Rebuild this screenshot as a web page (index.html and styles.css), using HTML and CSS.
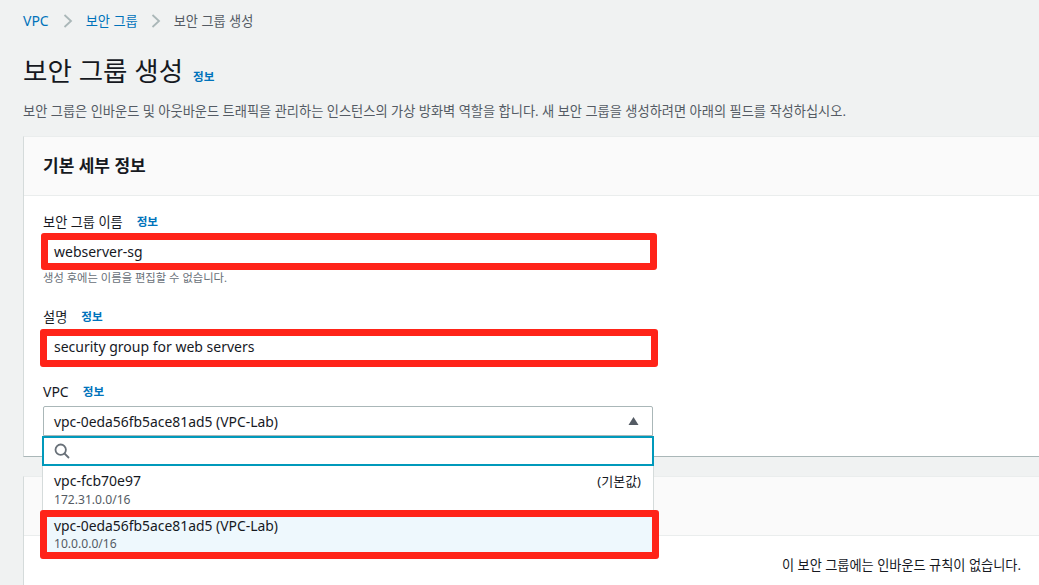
FILE: index.html
```html
<!DOCTYPE html>
<html lang="ko">
<head>
<meta charset="utf-8">
<title>보안 그룹 생성</title>
<link rel="stylesheet" href="styles.css">
</head>
<body>
<div class="page">
  <nav class="crumbs">
    <a class="link link-root">VPC</a>
    <svg class="sep" viewBox="0 0 10 14" width="10" height="14"><path d="M1.5 1 L8 7 L1.5 13" fill="none" stroke="#aab7b8" stroke-width="1.8"/></svg>
    <a class="link">보안 그룹</a>
    <svg class="sep sep-last" viewBox="0 0 10 14" width="10" height="14"><path d="M1.5 1 L8 7 L1.5 13" fill="none" stroke="#aab7b8" stroke-width="1.8"/></svg>
    <span class="current">보안 그룹 생성</span>
  </nav>
  <header class="title-row">
    <h1 class="title">보안 그룹 생성</h1>
    <a class="info info-title">정보</a>
  </header>
  <p class="lead">보안 그룹은 인바운드 및 아웃바운드 트래픽을 관리하는 인스턴스의 가상 방화벽 역할을 합니다. 새 보안 그룹을 생성하려면 아래의 필드를 작성하십시오.</p>

  <section class="card">
    <div class="card-head"><h2 class="card-title">기본 세부 정보</h2></div>
    <div class="card-body">
      <div class="field field-name">
        <div class="label-row"><span class="label">보안 그룹 이름</span><a class="info">정보</a></div>
        <div class="input">webserver-sg</div>
        <div class="hint">생성 후에는 이름을 편집할 수 없습니다.</div>
      </div>
      <div class="field field-desc">
        <div class="label-row"><span class="label">설명</span><a class="info">정보</a></div>
        <div class="input">security group for web servers</div>
      </div>
      <div class="field field-vpc">
        <div class="label-row"><span class="label label-latin">VPC</span><a class="info">정보</a></div>
        <div class="select">
          <span class="select-value">vpc-0eda56fb5ace81ad5 (VPC-Lab)</span>
          <svg class="caret" viewBox="0 0 10 8" width="11" height="8"><path d="M5 0 L10 8 L0 8 Z" fill="#545b64"/></svg>
          <div class="menu">
            <div class="search">
              <svg viewBox="0 0 16 16" width="16" height="16"><circle cx="6.7" cy="6.7" r="5.2" fill="none" stroke="#687078" stroke-width="1.8"/><path d="M10.5 10.5 L15 15" stroke="#687078" stroke-width="1.8" fill="none"/></svg>
            </div>
            <div class="option">
              <div class="option-main"><span>vpc-fcb70e97</span><span class="option-tag">(기본값)</span></div>
              <div class="option-sub">172.31.0.0/16</div>
            </div>
            <div class="option option-selected">
              <div class="option-main"><span class="select-value">vpc-0eda56fb5ace81ad5 (VPC-Lab)</span></div>
              <div class="option-sub">10.0.0.0/16</div>
            </div>
          </div>
        </div>
      </div>
    </div>
  </section>

  <section class="card card-second">
    <div class="card-head"></div>
    <div class="card-body empty">이 보안 그룹에는 인바운드 규칙이 없습니다.</div>
  </section>
</div>
<div class="mark mark-name"></div>
<div class="mark mark-desc"></div>
<div class="mark mark-vpc"></div>
</body>
</html>
```
FILE: styles.css
```css
* { box-sizing: border-box; }
html, body { margin: 0; height: 100%; overflow: hidden; }
body {
  background: #f0f2f2;
  color: #16191f;
  font-family: "Noto Sans", "Noto Sans CJK KR", sans-serif;
  font-size: 14px;
  position: relative;
}
.page { padding: 11px 0 0 23px; }
.crumbs { display: flex; align-items: center; height: 20px; font-size: 13.2px; line-height: 20px; }
.link { color: #0073bb; }
.link-root { font-size: 14px; }
.sep { margin: 0 13px 0 14px; }
.sep-last { margin: 0 13px 0 13px; }
.current { color: #545b64; }
.title-row { display: flex; align-items: flex-end; margin-top: 20px; height: 40px; }
.title { margin: 0; font-size: 26.5px; font-weight: 400; line-height: 40px; }
.info { color: #0073bb; font-size: 11.6px; font-weight: 700; line-height: 16px; }
.info-title { margin: 0 0 6px 10px; }
.lead { margin: 10px 0 0; font-size: 13.22px; line-height: 20px; color: #545b64; white-space: nowrap; }
.card { margin-top: 15px; background: #fff; border-left: 1px solid #d5dbdb; border-top: 1px solid #eaeded; border-bottom: 1px solid #aab7b8; height: 321px; }
.card-head { height: 59px; background: #fafafa; border-bottom: 1px solid #eaeded; padding: 0 0 0 19px; display: flex; align-items: center; }
.card-title { margin: 0; font-size: 17px; font-weight: 700; line-height: 22px; }
.card-body { padding: 16px 0 0 19px; }
.field { width: 610px; }
.label-row { display: flex; align-items: center; gap: 14px; height: 20px; }
.label { font-size: 13.2px; line-height: 20px; }
.label-latin { font-size: 14px; }
.input { height: 24px; margin-top: 8px; padding-left: 11px; font-size: 14px; line-height: 24px; color: #16191f; background: #fff; }
.hint { margin-top: 6px; font-size: 11.3px; line-height: 16px; color: #687078; }
.field-desc { margin-top: 21px; }
.field-vpc { margin-top: 23px; }
.select { position: relative; display: flex; align-items: center; justify-content: space-between; height: 30px; margin-top: 4px; padding: 0 13px 0 10px; border: 1px solid #aab7b8; border-radius: 2px 2px 0 0; background: #fff; width: 610px; }
.select-value { font-size: 13.9px; }
.menu { position: absolute; left: -2px; top: 29px; width: 612px; background: #fff; border-left: 1px solid #d5dbdb; border-right: 1px solid #d5dbdb; z-index: 2; }
.search { height: 30px; border: 2px solid #0099bb; margin: 0 -1px; padding-left: 10px; display: flex; align-items: center; }
.option { padding: 0 12px 0 11px; height: 45px; }
.option-main { line-height: 20px; padding-top: 5px; height: 25px; display: flex; justify-content: space-between; }
.option-tag { font-size: 13px; }
.option-sub { margin-top: 1px; font-size: 12.1px; line-height: 16px; color: #545b64; }
.option-selected { background: #eef8fd; height: 44px; }
.option-selected .option-sub { margin-top: 0; }
.card-second { margin-top: 19px; height: 109px; border-bottom: 0; }
.empty { padding: 20px 18px 0 0; text-align: right; font-size: 13.2px; line-height: 18px; }
.mark { position: absolute; border: 7px solid #ff2419; border-radius: 3px; pointer-events: none; z-index: 5; }
.mark-name { left: 41px; top: 233px; width: 616px; height: 37px; }
.mark-desc { left: 40px; top: 329px; width: 618px; height: 38px; }
.mark-vpc { left: 40px; top: 510px; width: 619px; height: 49px; }
```
